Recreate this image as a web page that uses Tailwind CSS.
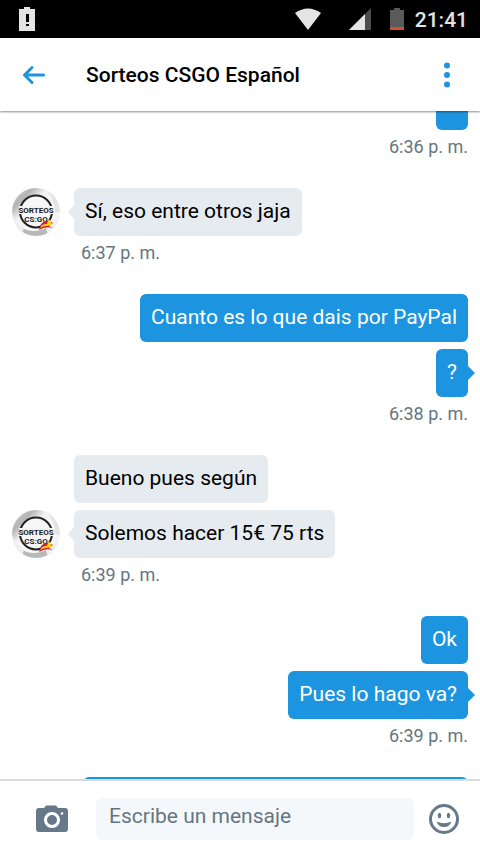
<!DOCTYPE html>
<html lang="es">
<head>
<meta charset="utf-8">
<meta name="viewport" content="width=device-width, initial-scale=1">
<title>Sorteos CSGO Español</title>
<script src="https://cdn.jsdelivr.net/npm/@tailwindcss/browser@4"></script>
</head>
<body class="flex h-screen flex-col overflow-hidden bg-white font-[Roboto,sans-serif] text-black">

<!-- Shared artwork behind and in front of the avatar's lettering -->
<svg class="absolute size-0" aria-hidden="true">
  <defs>
    <linearGradient id="silver" x1="0" y1="0" x2="1" y2="1">
      <stop offset="0" stop-color="#d4d4d4"/><stop offset=".22" stop-color="#b4b4b4"/><stop offset=".38" stop-color="#f2f2f2"/>
      <stop offset=".7" stop-color="#fafafa"/><stop offset="1" stop-color="#dedede"/>
    </linearGradient>
    <clipPath id="disc"><circle cx="24" cy="24" r="24"/></clipPath>
    <g id="medal" clip-path="url(#disc)">
      <rect width="48" height="48" fill="url(#silver)"/>
      <path d="M2 31C9 43 21 46 34 40L36 48H8Z" fill="#b8b8b8"/>
      <path d="M0 24C3 33 7 38 12 41L8 48H0Z" fill="#f0f0f0"/>
      <path d="M33 0Q43 10 43 25L48 24V0Z" fill="#e4e4e4"/>
      <circle cx="24" cy="23.500" r="16" fill="#f7f7f7" stroke="#222" stroke-width="2"/>
      <rect x="7" y="18" width="34" height="8" fill="#f3f3f3"/>
    </g>
    <g id="flag">
      <path d="M27 42Q29 35 33 36Q36 32 41 35L37 38L41 40Q33 38 27 42Z" fill="#d7202b"/>
      <path d="M28 40Q31 35 35 36Q36 31 38 32Q38 35 41 36Q38 38 34 38Q31 38 28 40Z" fill="#ffd31c"/>
      <path d="M28 38Q30 33 36 33L34 36Q31 36 28 38Z" fill="#d7202b"/>
    </g>
  </defs>
</svg>

<div class="flex h-[38px] shrink-0 items-center bg-black pr-3 pl-[19px]">
  <svg class="mr-auto h-6 w-4" viewBox="0 0 16 24" fill="#e4e4e4" aria-hidden="true"><path fill-rule="evenodd" d="M5 0h6v2h5v22H0V2h5ZM7 7v8h3V7Zm0 10v2h3v-2Z"/></svg>
  <svg class="mr-7 h-[22px] w-[26px]" viewBox="0 0 26 22" fill="#e4e4e4" aria-hidden="true"><path d="M0 5Q13 -4 26 5L13 22Z"/></svg>
  <svg class="mr-[19px] h-[22px] w-[22px]" viewBox="0 0 22 22" aria-hidden="true"><path d="M22 0V22H0Z" fill="#4c4c4c"/><path d="M16 6V22H0Z" fill="#e4e4e4"/></svg>
  <svg class="mr-[11px] h-[22px] w-[14px]" viewBox="0 0 14 22" aria-hidden="true"><path d="M4 0h6v2h4v17H0V2h4Z" fill="#5a5a5a"/><path d="M0 19h14v3H0Z" fill="#d2502f"/></svg>
  <time class="pt-0.5 text-[21px] leading-6 font-medium text-[#e4e4e4]">21:41</time>
</div>

<header class="z-10 flex h-[73px] shrink-0 items-center bg-white pr-[19px] pl-[22px] shadow-[0_1px_2px_rgba(0,0,0,0.45)]">
  <button type="button" aria-label="Atrás" class="mr-10">
    <svg class="block h-6 w-6" viewBox="0 0 24 24" fill="none" stroke="#1c94e0" stroke-width="3" stroke-linecap="round" stroke-linejoin="round"><path d="M21.500 12H2.500M10 4.500L2.500 12L10 19.500"/></svg>
  </button>
  <h1 class="mr-auto text-[21px] leading-6 font-medium">Sorteos CSGO Español</h1>
  <button type="button" aria-label="Más opciones">
    <svg class="block h-7 w-7" viewBox="0 0 28 28" fill="#1c94e0"><circle cx="14" cy="4.500" r="3"/><circle cx="14" cy="14" r="3"/><circle cx="14" cy="23.500" r="3"/></svg>
  </button>
</header>

<main class="min-h-0 flex-1 overflow-hidden px-3">
  <div class="-mt-[29px] flex flex-col gap-[29px] text-[21px] leading-6">
    <section class="flex flex-col items-end">
      <div class="h-12 w-8 rounded-md bg-[#1c94e0]"></div>
      <time class="mt-[5px] text-[18px] text-[#66757f]">6:36 p. m.</time>
    </section>

    <section class="flex flex-col items-start">
      <div class="flex items-center">
        <svg class="h-12 w-12" viewBox="0 0 48 48" font-size="8" font-weight="700" text-anchor="middle" fill="#222">
          <use href="#medal"/>
          <text x="24" y="25">SORTEOS</text>
          <text x="24" y="34">CS:GO</text>
          <use href="#flag"/>
        </svg>
        <svg class="ml-2 h-3.5 w-1.5" viewBox="0 0 6 14" fill="#e6ebf0" aria-hidden="true"><path d="M6 0V14L0 7Z"/></svg>
        <p class="rounded-md bg-[#e6ebf0] px-[11px] pt-[11px] pb-[13px]">Sí, eso entre otros jaja</p>
      </div>
      <time class="mt-[5px] ml-[69px] text-[18px] text-[#66757f]">6:37 p. m.</time>
    </section>

    <section class="flex flex-col items-end">
      <p class="rounded-md bg-[#1c94e0] px-[11px] pt-[11px] pb-[13px] text-white">Cuanto es lo que dais por PayPal</p>
      <div class="mt-[7px] -mr-[7px] flex items-center">
        <p class="rounded-md bg-[#1c94e0] px-[11px] pt-[11px] pb-[13px] text-white">?</p>
        <svg class="h-3.5 w-[7px]" viewBox="0 0 7 14" fill="#1c94e0" aria-hidden="true"><path d="M0 0V14L7 7Z"/></svg>
      </div>
      <time class="mt-[5px] text-[18px] text-[#66757f]">6:38 p. m.</time>
    </section>

    <section class="flex flex-col items-start">
      <p class="ml-[62px] rounded-md bg-[#e6ebf0] px-[11px] pt-[11px] pb-[13px]">Bueno pues según</p>
      <div class="mt-[7px] flex items-center">
        <svg class="h-12 w-12" viewBox="0 0 48 48" font-size="8" font-weight="700" text-anchor="middle" fill="#222">
          <use href="#medal"/>
          <text x="24" y="25">SORTEOS</text>
          <text x="24" y="34">CS:GO</text>
          <use href="#flag"/>
        </svg>
        <svg class="ml-2 h-3.5 w-1.5" viewBox="0 0 6 14" fill="#e6ebf0" aria-hidden="true"><path d="M6 0V14L0 7Z"/></svg>
        <p class="rounded-md bg-[#e6ebf0] px-[11px] pt-[11px] pb-[13px]">Solemos hacer 15€ 75 rts</p>
      </div>
      <time class="mt-[5px] ml-[69px] text-[18px] text-[#66757f]">6:39 p. m.</time>
    </section>

    <section class="flex flex-col items-end">
      <p class="rounded-md bg-[#1c94e0] px-[11px] pt-[11px] pb-[13px] text-white">Ok</p>
      <div class="mt-[7px] -mr-[7px] flex items-center">
        <p class="rounded-md bg-[#1c94e0] px-[11px] pt-[11px] pb-[13px] text-white">Pues lo hago va?</p>
        <svg class="h-3.5 w-[7px]" viewBox="0 0 7 14" fill="#1c94e0" aria-hidden="true"><path d="M0 0V14L7 7Z"/></svg>
      </div>
      <time class="mt-[5px] text-[18px] text-[#66757f]">6:39 p. m.</time>
    </section>

    <div class="ml-[71px] h-12 rounded-md bg-[#1c94e0]"></div>
  </div>
</main>

<form class="z-10 flex h-[75px] shrink-0 items-center border-t-2 border-[#cfd3d6]/80 bg-white pt-0.5 pr-[21px] pl-9">
  <button type="button" aria-label="Enviar foto" class="mr-7">
    <svg class="block h-7 w-8" viewBox="0 0 32 28"><path d="M3 3H8L10 0.500H20L22 3H29Q32 3 32 6V24Q32 27 29 27H3Q0 27 0 24V6Q0 3 3 3Z" fill="#66788a"/><circle cx="16" cy="15" r="6.500" fill="none" stroke="#fff" stroke-width="3"/><circle cx="26" cy="8.500" r="1.300" fill="#fff"/></svg>
  </button>
  <input type="text" aria-label="Escribe un mensaje" placeholder="Escribe un mensaje" class="mr-[15px] h-[42px] min-w-0 flex-1 rounded-md bg-[#f4f8fb] px-[13px] pb-1.5 text-[21px] leading-6 outline-none placeholder:text-[#66757f]">
  <button type="button" aria-label="Emoji">
    <svg class="block h-[30px] w-[30px]" viewBox="0 0 30 30"><circle cx="15" cy="15" r="13.500" fill="none" stroke="#66788a" stroke-width="3"/><ellipse cx="10.500" cy="11.500" rx="1.700" ry="2.700" fill="#66788a"/><ellipse cx="19.500" cy="11.500" rx="1.700" ry="2.700" fill="#66788a"/><path d="M7.500 17.500Q15 21 22.500 17.500Q20.500 23 15 23T7.500 17.500Z" fill="#66788a"/></svg>
  </button>
</form>
</body>
</html>
